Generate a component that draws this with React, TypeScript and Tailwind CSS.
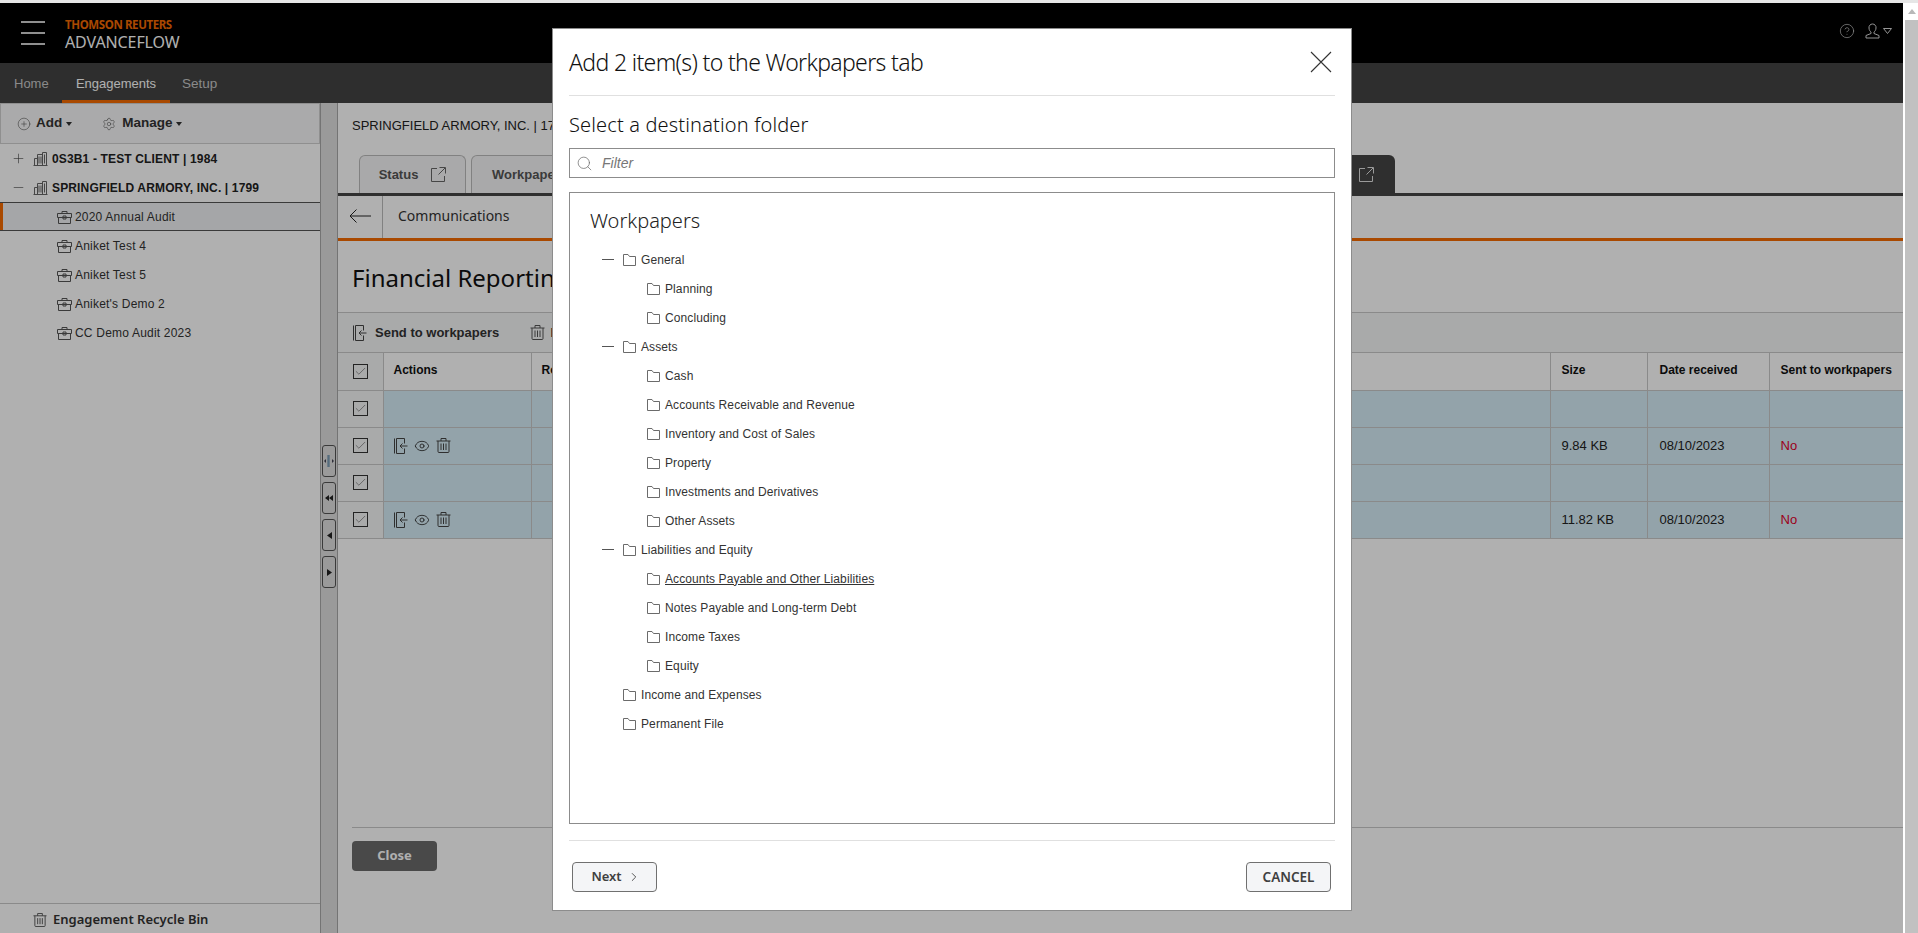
import { ChevronRight, CirclePlus, Eye, Search, Settings, CircleHelp, Check, Plus, Minus } from 'lucide-react';

const ARIAL = 'font-["Liberation_Sans",Arial,sans-serif]';

const FOLDERS = [
  { label: 'General', level: 1, open: true },
  { label: 'Planning', level: 2 },
  { label: 'Concluding', level: 2 },
  { label: 'Assets', level: 1, open: true },
  { label: 'Cash', level: 2 },
  { label: 'Accounts Receivable and Revenue', level: 2 },
  { label: 'Inventory and Cost of Sales', level: 2 },
  { label: 'Property', level: 2 },
  { label: 'Investments and Derivatives', level: 2 },
  { label: 'Other Assets', level: 2 },
  { label: 'Liabilities and Equity', level: 1, open: true },
  { label: 'Accounts Payable and Other Liabilities', level: 2, hover: true },
  { label: 'Notes Payable and Long-term Debt', level: 2 },
  { label: 'Income Taxes', level: 2 },
  { label: 'Equity', level: 2 },
  { label: 'Income and Expenses', level: 1 },
  { label: 'Permanent File', level: 1 },
];

const ROWS = [
  { actions: false },
  { actions: true, size: '9.84 KB', date: '08/10/2023', sent: 'No' },
  { actions: false },
  { actions: true, size: '11.82 KB', date: '08/10/2023', sent: 'No' },
];

function FolderIcon() {
  return (
    <svg width="15" height="13" viewBox="0 0 15 13" fill="none" stroke="#6b6b6b" strokeWidth="1" className="shrink-0">
      <path d="M1.5 12.5V1.5H6L7.5 3.5H13.5V12.5H1.5Z" />
    </svg>
  );
}

function BuildingIcon() {
  return (
    <svg width="15" height="15" viewBox="0 0 15 15" fill="none" stroke="#666" strokeWidth="1" className="shrink-0">
      <path d="M.5 14.5h14M1.5 14.5V7.5h3M4.5 14.5V3.5h5v11M9.5 14.5V1.5h4v13M6 5.5v7M8 5.5v7M11.5 3.5v9" />
    </svg>
  );
}

function CaseIcon() {
  return (
    <svg width="15" height="14" viewBox="0 0 15 14" fill="none" stroke="#555" strokeWidth="1" className="shrink-0">
      <path d="M.5 3.5h14v4H.5zM1.5 7.5v6h12v-6M5 3.5v-2h5v2M6 6h3v3H6z" />
    </svg>
  );
}

function SendIcon() {
  return (
    <svg width="14" height="16" viewBox="0 0 14 16" fill="none" stroke="#444" strokeWidth="1" className="shrink-0">
      <path d="M.5.5v15M2.5.5v15M2.5.5h8v5M2.5 15.5h8v-5M13.5 8H6M8.5 5.5 6 8l2.5 2.5" />
    </svg>
  );
}

function TrashIcon({ size = 15, color = '#444' }: { size?: number; color?: string }) {
  return (
    <svg width={size} height={size} viewBox="0 0 15 15" fill="none" stroke={color} strokeWidth="1" className="shrink-0">
      <path d="M.5 3h14M5 3V.5h5V3M2 3v10.5a1 1 0 0 0 1 1h9a1 1 0 0 0 1-1V3M5 5.5v6.5M7.5 5.5v6.5M10 5.5v6.5" />
    </svg>
  );
}

function ExternalIcon({ color }: { color: string }) {
  return (
    <svg width="15" height="15" viewBox="0 0 15 15" fill="none" stroke={color} strokeWidth="1" className="shrink-0">
      <path d="M6 1.5H.5v13h13V9M8.5.5h6v6M14 1 7.5 7.5" />
    </svg>
  );
}

function RowCheck() {
  return (
    <span className="flex h-[15px] w-[15px] items-center justify-center border border-[#333] bg-transparent">
      <Check size={13} strokeWidth={1} className="text-[#444]" />
    </span>
  );
}

function SplitterButton({ children }: { children: React.ReactNode }) {
  return (
    <div className="flex h-[32px] w-[14px] items-center justify-center rounded-[3px] border border-[#555] bg-[#dfdfdf]">
      {children}
    </div>
  );
}

export default function App() {
  return (
    <div className={`flex h-[933px] w-full flex-col overflow-hidden bg-white text-[12px] text-[#222] ${ARIAL}`}>
      <div className="h-[3px] shrink-0 bg-[#e6e6e6]" />
      <div className="flex min-h-0 flex-1">
        <div className="relative min-w-0 flex-1">
          {/* Page behind the dialog */}
          <div className="flex h-full flex-col">
            <header className="flex h-[60px] shrink-0 items-center bg-black">
              <div className="ml-[21px] flex w-[24px] flex-col gap-[9px]">
                <span className="h-[2px] bg-[#cfcfcf]" />
                <span className="h-[2px] bg-[#cfcfcf]" />
                <span className="h-[2px] bg-[#cfcfcf]" />
              </div>
              <div className='ml-[20px] pt-[3px] font-["Noto_Sans",sans-serif]'>
                <div className="text-[11.5px] font-bold leading-[14px] tracking-[-0.4px] text-[#f56a00]">THOMSON REUTERS</div>
                <div className="text-[16px] leading-[20px] tracking-[-0.1px] text-white">ADVANCEFLOW</div>
              </div>
              <div className="ml-auto flex items-center pb-[4px] pr-[11px] text-[#d8d8d8]">
                <CircleHelp size={16} strokeWidth={1} />
                <svg width="15" height="16" viewBox="0 0 15 16" fill="none" stroke="#d8d8d8" strokeWidth="1" className="ml-[10px]">
                  <path d="M7.5 1a3.5 3.5 0 0 1 3.5 4c0 2-1.2 3.5-2 4v1.5l5 2v2.5H1V12.5l5-2V9C5.200 8.500 4 7 4 5a3.500 3.500 0 0 1 3.500-4Z" />
                </svg>
                <svg width="9" height="6" viewBox="0 0 9 6" fill="none" stroke="#d8d8d8" className="ml-[3px]">
                  <path d="M.5.5h8L4.5 5.5z" />
                </svg>
              </div>
            </header>

            <nav className="flex h-[40px] shrink-0 bg-[#434343] text-[13px]">
              <span className="flex w-[62px] items-center pl-[14px] pt-[2px] text-[#c8c8c8]">Home</span>
              <span className="flex w-[108px] items-center justify-center border-b-[3px] border-[#f56a00] pt-[5px] text-white">Engagements</span>
              <span className="flex items-center pl-[12px] pt-[2px] text-[13.5px] text-[#c8c8c8]">Setup</span>
            </nav>

            <div className="flex min-h-0 flex-1">
              {/* Engagement tree */}
              <aside className="flex w-[320px] shrink-0 flex-col bg-white">
                <div className="flex h-[41px] shrink-0 items-center border border-[#d0d0d0] bg-[#f7f7f8] pl-[16px] text-[13.5px] font-bold text-[#333]">
                  <CirclePlus size={14} strokeWidth={1} className="text-[#555]" />
                  <span className="ml-[5px]">Add</span>
                  <span className="ml-[4px] h-0 w-0 border-x-[3.500px] border-t-[4px] border-x-transparent border-t-[#333]" />
                  <Settings size={14} strokeWidth={1} className="ml-[30px] text-[#555]" />
                  <span className="ml-[6px]">Manage</span>
                  <span className="ml-[3px] h-0 w-0 border-x-[3.500px] border-t-[4px] border-x-transparent border-t-[#333]" />
                </div>
                {[
                  { label: '0S3B1 - TEST CLIENT | 1984', icon: 'plus' },
                  { label: 'SPRINGFIELD ARMORY, INC. | 1799', icon: 'minus' },
                ].map(client => (
                  <div key={client.label} className="flex h-[29px] shrink-0 items-center pl-[11px] font-bold tracking-[0.15px] text-[#222]">
                    {client.icon === 'plus' ? <Plus size={15} strokeWidth={1} className="text-[#444]" /> : <Minus size={15} strokeWidth={1} className="text-[#444]" />}
                    <span className="ml-[7px]"><BuildingIcon /></span>
                    <span className="ml-[4px]">{client.label}</span>
                  </div>
                ))}
                {['2020 Annual Audit', 'Aniket Test 4', 'Aniket Test 5', "Aniket's Demo 2", 'CC Demo Audit 2023'].map((name, i) => (
                  <div
                    key={name}
                    className={`flex h-[29px] shrink-0 items-center gap-[3px] pl-[57px] tracking-[0.2px] ${i === 0 ? 'relative border-y border-[#555] bg-[#eff1f3]' : ''}`}
                  >
                    {i === 0 && <span className="absolute bottom-0 left-0 top-0 w-[3px] bg-[#f56a00]" />}
                    <CaseIcon />
                    <span className="text-[#333]">{name}</span>
                  </div>
                ))}
                <div className="mt-auto flex h-[30px] shrink-0 items-center border-t border-[#c8c8c8] pl-[33px] pt-[3px] font-['Noto_Sans',sans-serif] text-[13px] font-semibold text-[#333]">
                  <TrashIcon size={14} color="#555" />
                  <span className="ml-[6px]">Engagement Recycle Bin</span>
                </div>
              </aside>

              {/* Splitter */}
              <div className="flex w-[18px] shrink-0 flex-col items-center gap-[5px] border-x border-[#a8a8a8] bg-[#dfdfdf] pt-[342px]">
                <SplitterButton>
                  <svg width="10" height="12" viewBox="0 0 10 12" fill="#445">
                    <path d="M5 0v12M4 0v12" stroke="#5b87a8" /><path d="M0 6l2-2v4zM10 6L8 4v4z" />
                  </svg>
                </SplitterButton>
                <SplitterButton>
                  <svg width="8" height="6" viewBox="0 0 8 6" fill="#222"><path d="M0 3l4-3v6zM4 3l4-3v6z" /></svg>
                </SplitterButton>
                <SplitterButton>
                  <svg width="5" height="7" viewBox="0 0 5 7" fill="#222"><path d="M0 3.500 5 0v7z" /></svg>
                </SplitterButton>
                <SplitterButton>
                  <svg width="5" height="7" viewBox="0 0 5 7" fill="#222"><path d="M5 3.500 0 0v7z" /></svg>
                </SplitterButton>
              </div>

              {/* Engagement pane */}
              <main className="flex min-w-0 flex-1 flex-col bg-white">
                <div className="flex h-[52px] shrink-0 items-start pl-[14px] pt-[13px] text-[13px] text-[#222]">SPRINGFIELD ARMORY, INC. | 1799</div>
                <div className="flex h-[41px] shrink-0 items-end gap-[5px] border-b-[3px] border-[#444] pl-[21px]">
                  <div className="flex h-[38px] w-[107px] items-center justify-center gap-[13px] rounded-t-[6px] border border-b-0 border-[#bbb] bg-[#f5f5f6] text-[13px] font-bold text-[#555]">
                    Status
                    <ExternalIcon color="#666" />
                  </div>
                  <div className="flex h-[38px] w-[300px] items-center rounded-t-[6px] border border-b-0 border-[#bbb] bg-[#f5f5f6] pl-[20px] text-[13px] font-bold text-[#555]">
                    Workpapers
                  </div>
                  <div className="ml-[519px] flex h-[38px] w-[100px] items-center justify-end rounded-t-[6px] bg-[#444] pr-[21px]">
                    <ExternalIcon color="#e0e0e0" />
                  </div>
                </div>
                <div className="flex h-[45px] shrink-0 border-b-[3px] border-[#f56a00]">
                  <div className="flex w-[45px] items-center justify-center border-r border-[#bbb] pb-[2px]">
                    <svg width="22" height="14" viewBox="0 0 22 14" fill="none" stroke="#222" strokeWidth="1">
                      <path d="M22 7H1M7.500.5 1 7l6.500 6.500" />
                    </svg>
                  </div>
                  <span className='flex items-center pb-[3px] pl-[15px] font-["Noto_Sans",sans-serif] text-[14px] text-[#333]'>Communications</span>
                </div>
                <div className='flex h-[71px] shrink-0 items-center pl-[14px] pt-[3px] font-["Noto_Sans",sans-serif] text-[24px] text-[#111]'>Financial Reporting</div>
                <div className="flex h-[41px] shrink-0 items-center border-y border-[#c8c8c8] bg-[#f5f6f7] pl-[15px] text-[13px] font-bold text-[#333]">
                  <SendIcon />
                  <span className="ml-[8px]">Send to workpapers</span>
                  <span className="ml-[31px]"><TrashIcon color="#555" /></span>
                  <span className="ml-[5px] font-normal">Delete</span>
                </div>
                <table className="w-full shrink-0 table-fixed border-collapse">
                  <colgroup>
                    <col className="w-[45px]" />
                    <col className="w-[148px]" />
                    <col />
                    <col className="w-[97px]" />
                    <col className="w-[122px]" />
                    <col className="w-[134px]" />
                  </colgroup>
                  <thead>
                    <tr className="h-[37px] border-b border-[#c8c8c8] text-left font-bold text-[#111]">
                      <th className="border-r border-[#c8c8c8] bg-[#f5f6f7]">
                        <div className="flex justify-center"><RowCheck /></div>
                      </th>
                      <th className="border-r border-[#c8c8c8] pb-[2px] pl-[10px]">Actions</th>
                      <th className="border-r border-[#c8c8c8] pb-[2px] pl-[10px]">Received from</th>
                      <th className="border-r border-[#c8c8c8] pb-[2px] pl-[11px]">Size</th>
                      <th className="border-r border-[#c8c8c8] pb-[2px] pl-[12px]">Date received</th>
                      <th className="pb-[2px] pl-[11px]">Sent to workpapers</th>
                    </tr>
                  </thead>
                  <tbody>
                    {ROWS.map((row, i) => (
                      <tr key={i} className="h-[37px] border-b border-[#c8c8c8] bg-[#d6ecf6] text-[13px] text-[#222]">
                        <td className="border-r border-[#c8c8c8] bg-[#f5f6f7]">
                          <div className="flex justify-center"><RowCheck /></div>
                        </td>
                        <td className="border-r border-[#c8c8c8] pl-[10px]">
                          {row.actions && (
                            <div className="flex items-center gap-[6px]">
                              <SendIcon />
                              <Eye size={16} strokeWidth={1.2} className="text-[#222]" />
                              <TrashIcon />
                            </div>
                          )}
                        </td>
                        <td className="border-r border-[#c8c8c8]" />
                        <td className="border-r border-[#c8c8c8] pl-[11px]">{row.size}</td>
                        <td className="border-r border-[#c8c8c8] pl-[12px]">{row.date}</td>
                        <td className="pl-[11px] text-[#e0002a]">{row.sent}</td>
                      </tr>
                    ))}
                  </tbody>
                </table>
                <div className="ml-[14px] mt-[288px] flex h-[44px] items-end border-t border-[#c8c8c8]">
                  <button className="h-[30px] w-[85px] rounded-[4px] bg-[#6a6a6a] font-['Noto_Sans',sans-serif] text-[13px] font-bold text-white">Close</button>
                </div>
              </main>
            </div>
          </div>

          {/* Modal backdrop */}
          <div className="absolute inset-0 bg-[rgba(0,0,0,0.31)]" />

          {/* Destination folder dialog */}
          <div className="absolute left-[552px] top-[25px] flex h-[883px] w-[800px] flex-col border border-[#8c8c8c] bg-white px-[16px]">
            <div className="flex h-[67px] shrink-0 items-center justify-between border-b border-[#e0e0e0]">
              <h2 className='font-["Noto_Sans",sans-serif] text-[23px] font-light tracking-[-0.65px] text-[#111]'>Add 2 item(s) to the Workpapers tab</h2>
              <svg width="22" height="22" viewBox="0 0 22 22" stroke="#333" strokeWidth="1.100" className="mr-[3px]">
                <path d="M1 1l20 20M21 1 1 21" />
              </svg>
            </div>
            <div className='flex h-[52px] shrink-0 items-center pt-[6px] font-["Noto_Sans",sans-serif] text-[20px] font-light tracking-[0.15px] text-[#111]'>Select a destination folder</div>
            <div className="flex h-[30px] shrink-0 items-center gap-[9px] border border-[#8c8c8c] pl-[6px]">
              <Search size={17} strokeWidth={1} className="text-[#666]" />
              <span className="text-[14px] italic text-[#777]">Filter</span>
            </div>
            <div className="mt-[14px] h-[632px] shrink-0 border border-[#8c8c8c] pl-[20px] pt-[14px]">
              <h3 className='font-["Noto_Sans",sans-serif] text-[20px] font-light leading-[28px] text-[#222]'>Workpapers</h3>
              <ul className="mt-[10px]">
                {FOLDERS.map(f => (
                  <li key={f.label} className={`flex h-[29px] items-center tracking-[0.1px] text-[#333] ${f.level === 1 ? 'pl-[12px]' : 'pl-[56px]'}`}>
                    {f.level === 1 && (
                      <span className="flex w-[20px] shrink-0 items-center">
                        {f.open && <span className="h-px w-[12px] bg-[#555]" />}
                      </span>
                    )}
                    <FolderIcon />
                    <span className={`ml-[4px] ${f.hover ? 'underline' : ''}`}>{f.label}</span>
                  </li>
                ))}
              </ul>
            </div>
            <div className="mt-[16px] flex shrink-0 justify-between border-t border-[#e0e0e0] pl-[3px] pr-[4px] pt-[21px] font-['Noto_Sans',sans-serif] text-[13.500px] font-semibold text-[#404040]">
              <button className="flex h-[30px] w-[85px] items-center justify-center gap-[5px] rounded-[4px] border border-[#707070] bg-[#f4f5f7] pl-[3px] text-[13px]">
                Next
                <ChevronRight size={14} strokeWidth={1.5} />
              </button>
              <button className="h-[30px] w-[85px] rounded-[4px] border border-[#707070] bg-[#f4f5f7]">CANCEL</button>
            </div>
          </div>
        </div>

        {/* Window scrollbar */}
        <div className="flex w-[15px] shrink-0 flex-col bg-white pl-[2px]">
          <div className="flex h-[17px] shrink-0 items-center justify-center">
            <span className="h-0 w-0 border-x-[4px] border-b-[5px] border-x-transparent border-b-[#b8b8b8]" />
          </div>
          <div className="flex-1 bg-[#c1c1c1]" />
        </div>
      </div>
    </div>
  );
}
